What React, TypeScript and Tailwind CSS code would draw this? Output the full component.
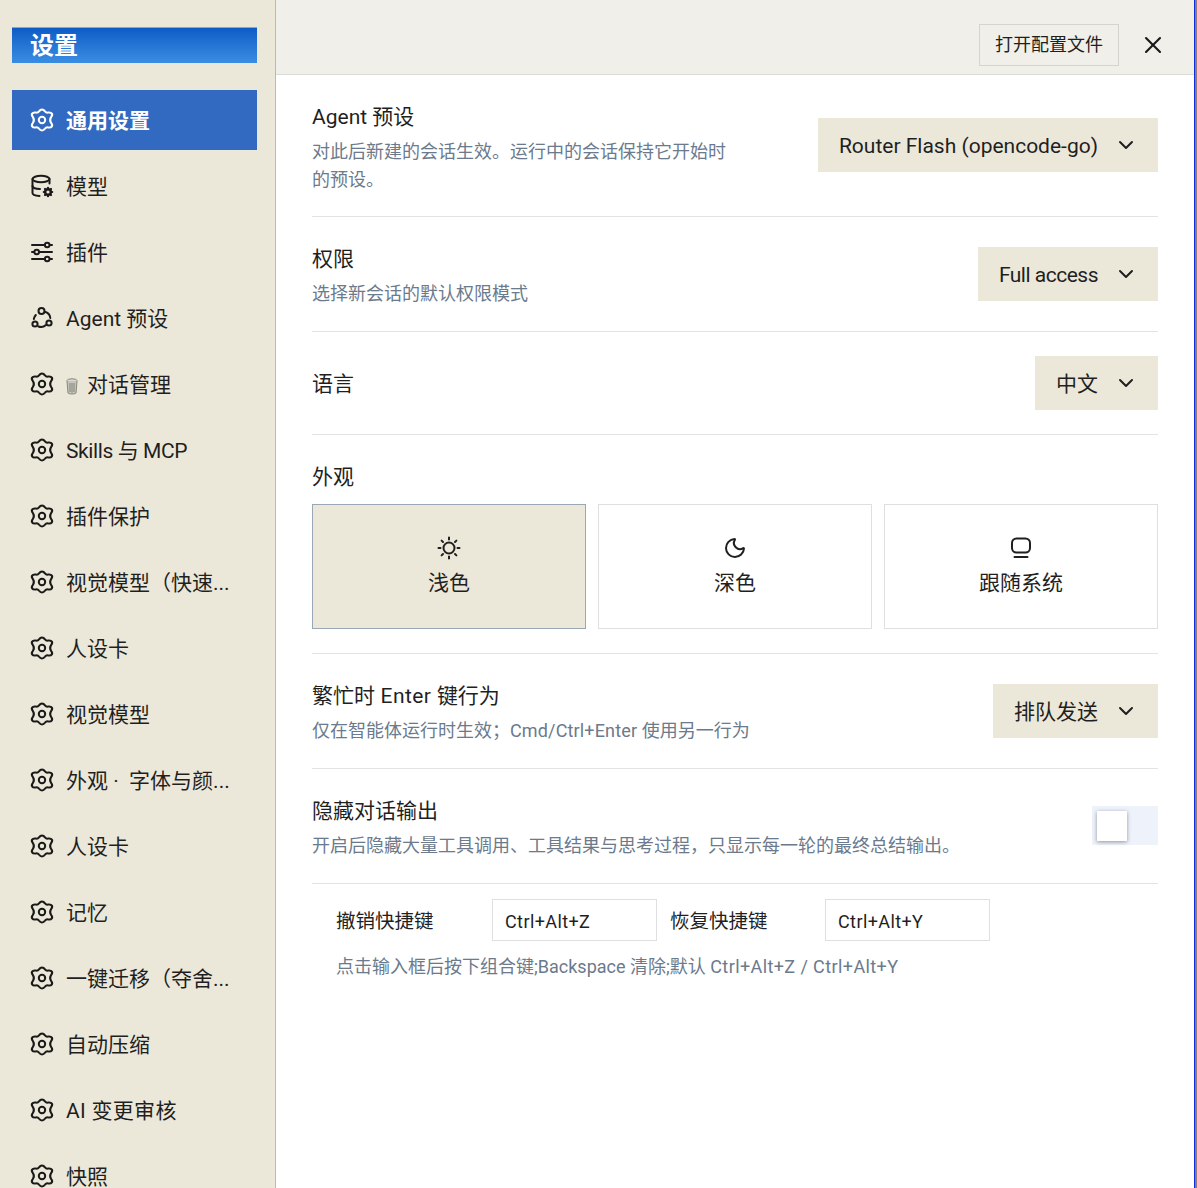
import React from "react";
import { ChevronDown, X, Moon } from "lucide-react";

const FONT = "font-['Roboto','Noto_Sans_CJK_SC',sans-serif]";

function Gear() {
  return (
    <svg width="24" height="24" viewBox="0 0 24 24" fill="none" stroke="currentColor" strokeWidth="2" strokeLinejoin="round">
      <g transform="translate(12 12) scale(1.12 1) translate(-12 -12)">
        <path d="M12 1.500C13.400 1.500 14.100 2.500 14.800 3.500C15.400 4.400 16.300 4.800 17.400 4.600C18.700 4.400 20 4.400 20.700 5.600C21.400 6.800 20.900 8 20.200 9C19.600 9.900 19.300 11 19.300 12C19.300 13 19.600 14.100 20.200 15C20.900 16 21.400 17.200 20.700 18.400C20 19.600 18.700 19.600 17.400 19.400C16.300 19.200 15.400 19.600 14.800 20.500C14.100 21.500 13.400 22.500 12 22.500C10.600 22.500 9.900 21.500 9.200 20.500C8.600 19.600 7.700 19.200 6.600 19.400C5.300 19.600 4 19.600 3.300 18.400C2.600 17.200 3.100 16 3.800 15C4.400 14.100 4.700 13 4.700 12C4.700 11 4.400 9.900 3.800 9C3.100 8 2.600 6.800 3.300 5.600C4 4.400 5.300 4.400 6.600 4.600C7.700 4.800 8.600 4.400 9.200 3.500C9.900 2.500 10.600 1.500 12 1.500Z" />
      </g>
      <circle cx="12" cy="12" r="3.200" />
    </svg>
  );
}

function DbGear() {
  return (
    <svg width="24" height="24" viewBox="0 0 24 24" fill="none" stroke="currentColor" strokeWidth="2" strokeLinecap="round" strokeLinejoin="round">
      <ellipse cx="11" cy="5" rx="8.500" ry="3.200" />
      <path d="M2.500 5v14c0 1.600 3 2.800 7 3" />
      <path d="M19.500 5v4.500" />
      <path d="M2.500 12c0 1.600 3 3 7.500 3" />
      <circle cx="18" cy="18" r="2.800" strokeWidth="2.400" />
      <path d="M18 13.800v.6M18 21.600v.6M13.800 18h.6M21.600 18h.6M15 15l.4.4M20.600 20.600l.4.4M15 21l.4-.4M20.600 15.400l.4-.4" strokeWidth="2.200" />
    </svg>
  );
}
function Sliders() {
  return (
    <svg width="24" height="24" viewBox="0 0 24 24" fill="none" stroke="currentColor" strokeWidth="2" strokeLinecap="round">
      <path d="M2 5h13M20 5h2M2 19h13M20 19h2M2 12h2M9 12h13" />
      <circle cx="17.200" cy="5" r="2.300" />
      <circle cx="6.700" cy="12" r="2.300" />
      <circle cx="17.200" cy="19" r="2.300" />
    </svg>
  );
}
function Agent() {
  return (
    <svg width="24" height="24" viewBox="0 0 24 24" fill="none" stroke="currentColor" strokeWidth="2" strokeLinecap="round">
      <circle cx="11.500" cy="5" r="3" />
      <circle cx="5" cy="18" r="2.600" />
      <circle cx="19" cy="17" r="2.600" />
      <path d="M8.500 20.500c2.500 1 5 .8 7.500-1.500M3.800 13c.2-1.500.9-2.800 2-4M15.500 6c2.500.8 4.500 3 4.800 6" />
    </svg>
  );
}
function Display() {
  return (
    <svg width="24" height="24" viewBox="0 0 24 24" fill="none" stroke="currentColor" strokeWidth="2" strokeLinecap="round">
      <rect x="3" y="2.500" width="18" height="14" rx="4.500" />
      <path d="M5.500 21h13" />
    </svg>
  );
}
function SunIcon() {
  return (
    <svg width="24" height="24" viewBox="0 0 24 24" fill="none" stroke="currentColor" strokeWidth="2" strokeLinecap="round">
      <circle cx="12" cy="12" r="5.500" />
      <path d="M12 1.500v2M12 20.500v2M1.500 12h2M20.500 12h2M4.600 4.600l1.400 1.400M18 18l1.400 1.400M4.600 19.400 6 18M18 6l1.400-1.400" />
    </svg>
  );
}

function Bin() {
  return (
    <svg width="12" height="17" viewBox="0 0 12 17" className="mr-[9px] shrink-0">
      <ellipse cx="6" cy="2.500" rx="5" ry="1.700" fill="#dcdad0" stroke="#85857c" strokeWidth="1" />
      <path d="M1 3l1 12c0 1.200 8 1.200 8 0l1-12" fill="#c6c5bb" stroke="#85857c" strokeWidth="1" />
      <path d="M4 5v9M6 5v9.500M8 5v9" stroke="#85857c" strokeWidth="1" />
    </svg>
  );
}

const G = <Gear />;
const items: { label: string; icon: React.ReactNode; bin?: boolean; cls?: string }[] = [
  { label: "模型", icon: <DbGear /> },
  { label: "插件", icon: <Sliders /> },
  { label: "Agent 预设", icon: <Agent /> },
  { label: "对话管理", icon: G, bin: true },
  { label: "Skills 与 MCP", icon: G, cls: "tracking-[-0.4px]" },
  { label: "插件保护", icon: G },
  { label: "视觉模型（快速...", icon: G },
  { label: "人设卡", icon: G },
  { label: "视觉模型", icon: G },
  { label: "外观 · \u00A0字体与颜...", icon: G },
  { label: "人设卡", icon: G },
  { label: "记忆", icon: G },
  { label: "一键迁移（夺舍...", icon: G },
  { label: "自动压缩", icon: G },
  { label: "AI 变更审核", icon: G, cls: "tracking-[0.3px]" },
  { label: "快照", icon: G },
];

function Select({ text, cls = "" }: { text: string; cls?: string }) {
  return (
    <div className="flex h-[54px] shrink-0 items-center gap-[16px] bg-[#ece8d9] pl-[21px] pr-[20px] text-[21px] text-[#1f1f1f]">
      <span className={`mt-[2px] -mb-[2px] ${cls}`}>{text}</span>
      <ChevronDown size={24} strokeWidth={2} />
    </div>
  );
}

function Theme({ icon, label, active }: { icon: React.ReactNode; label: string; active?: boolean }) {
  return (
    <div className={`flex h-[125px] flex-col items-center justify-center gap-[6px] border pb-[2px] text-[21px] text-[#1f1f1f] ${active ? "border-[#9aa7b5] bg-[#ece8d9]" : "border-[#dfdfdf] bg-white"}`}>
      {icon}
      <span className="mt-[2px] -mb-[2px] leading-[30px]">{label}</span>
    </div>
  );
}

function TextBlock({ title, desc }: { title: React.ReactNode; desc: React.ReactNode }) {
  return (
    <div className="pt-[3px]">
      <div className="text-[21px] leading-[30px]">{title}</div>
      <div className="mt-[7px] text-[18px] leading-[26px] text-[#6b7a8c]">{desc}</div>
    </div>
  );
}

export default function App() {
  return (
    <div className={`flex h-[1188px] w-[1197px] overflow-hidden bg-white ${FONT}`}>
      <aside className="flex h-full w-[276px] shrink-0 flex-col overflow-hidden border-r border-[#bdbbac] bg-[#ece8d9] pl-[12px] pr-[18px] pt-[27px]">
        <div className="h-[36px] shrink-0 border-t border-[#7fa8d8] bg-gradient-to-b from-[#0d5cc6] to-[#3b8de2] pl-[18px] text-[24px] font-bold leading-[36px] text-white">
          设置
        </div>
        <nav className="mt-[27px] flex flex-col gap-[6px]">
          <div className="flex h-[60px] shrink-0 items-center gap-[12px] bg-[#326ac2] pl-[18px] text-[21px] font-bold text-white">
            <Gear />
            <span className="mt-[2px] -mb-[2px]">通用设置</span>
          </div>
          {items.map((it, i) => (
            <div key={i} className="flex h-[60px] shrink-0 items-center gap-[12px] pl-[18px] text-[21px] text-[#1f1f1f]">
              <span className="flex w-[24px] shrink-0 items-center justify-center text-[#1a1a1a]">{it.icon}</span>
              <span className={`mt-[2px] -mb-[2px] flex items-center whitespace-pre ${it.cls ?? ""}`}>
                {it.bin && <Bin />}
                {it.label}
              </span>
            </div>
          ))}
        </nav>
      </aside>

      <main className="flex min-w-0 flex-1 flex-col">
        <header className="flex h-[75px] shrink-0 items-center justify-end border-b border-[#dcdcd6] bg-[#f0efe9] pr-[27px] pt-[15px]">
          <div className="flex h-[42px] w-[140px] items-center justify-center border border-[#d5d5d0] text-[18px] text-[#1f1f1f]">打开配置文件</div>
          <X size={28} strokeWidth={1.800} className="ml-[20px] text-[#1a1a1a]" />
        </header>
        <div className="flex flex-col pl-[36px] pr-[36px] text-[#1f1f1f]">
          <section className="flex h-[142px] items-start justify-between border-b border-[#e3e3e3] pt-[27px]">
            <div className="w-[430px]">
              <div className="text-[21px] leading-[30px]">Agent 预设</div>
              <div className="mt-[6px] text-[18px] leading-[28px] text-[#6b7a8c]">对此后新建的会话生效。运行中的会话保持它开始时的预设。</div>
            </div>
            <div className="pt-[16px]"><Select text="Router Flash (opencode-go)" /></div>
          </section>
          <section className="flex h-[115px] items-center justify-between border-b border-[#e3e3e3]">
            <TextBlock title="权限" desc="选择新会话的默认权限模式" />
            <Select text="Full access" cls="tracking-[-0.5px]" />
          </section>
          <section className="flex h-[103px] items-center justify-between border-b border-[#e3e3e3]">
            <div className="mt-[1px] -mb-[1px] text-[21px] leading-[30px]">语言</div>
            <Select text="中文" />
          </section>
          <section className="flex h-[219px] flex-col border-b border-[#e3e3e3] pt-[27px]">
            <div className="text-[21px] leading-[30px]">外观</div>
            <div className="mt-[12px] grid grid-cols-3 gap-[12px]">
              <Theme active label="浅色" icon={<SunIcon />} />
              <Theme label="深色" icon={<Moon size={24} strokeWidth={2} />} />
              <Theme label="跟随系统" icon={<Display />} />
            </div>
          </section>
          <section className="flex h-[115px] items-center justify-between border-b border-[#e3e3e3]">
            <TextBlock
              title={<>繁忙时<span className="tracking-[0.4px]"> Enter </span>键行为</>}
              desc={<>仅在智能体运行时生效；<span className="tracking-[0.15px]">Cmd/Ctrl+Enter</span> 使用另一行为</>}
            />
            <Select text="排队发送" />
          </section>
          <section className="flex h-[115px] items-center justify-between border-b border-[#e3e3e3]">
            <TextBlock title="隐藏对话输出" desc="开启后隐藏大量工具调用、工具结果与思考过程，只显示每一轮的最终总结输出。" />
            <div className="mb-[1px] flex h-[39px] w-[66px] items-center bg-[#eef2fb] pl-[5px]">
              <div className="h-[30px] w-[30px] bg-white shadow-[0_1px_4px_rgba(0,0,0,0.4)]" />
            </div>
          </section>
          <section className="pl-[24px] pt-[15px]">
            <div className="flex items-center text-[19.500px]">
              <span className="mt-[2px] -mb-[2px] w-[156px]">撤销快捷键</span>
              <div className="flex h-[42px] w-[165px] items-center border border-[#dfdfdf] pl-[12px] pt-[2px] text-[18px] tracking-[0.4px]">Ctrl+Alt+Z</div>
              <span className="ml-[13px] mt-[2px] -mb-[2px] w-[155px]">恢复快捷键</span>
              <div className="flex h-[42px] w-[165px] items-center border border-[#dfdfdf] pl-[12px] pt-[2px] text-[18px] tracking-[0.4px]">Ctrl+Alt+Y</div>
            </div>
            <div className="mt-[12px] text-[18px] leading-[28px] text-[#6b7a8c]">
              点击输入框后按下组合键;Backspace 清除;默认 <span className="tracking-[0.4px]">Ctrl+Alt+Z / Ctrl+Alt+Y</span>
            </div>
          </section>
        </div>
      </main>
      <div className="w-[1px] shrink-0 bg-[#0f2fd8]" />
      <div className="w-[2px] shrink-0 bg-[#808080]" />
    </div>
  );
}
